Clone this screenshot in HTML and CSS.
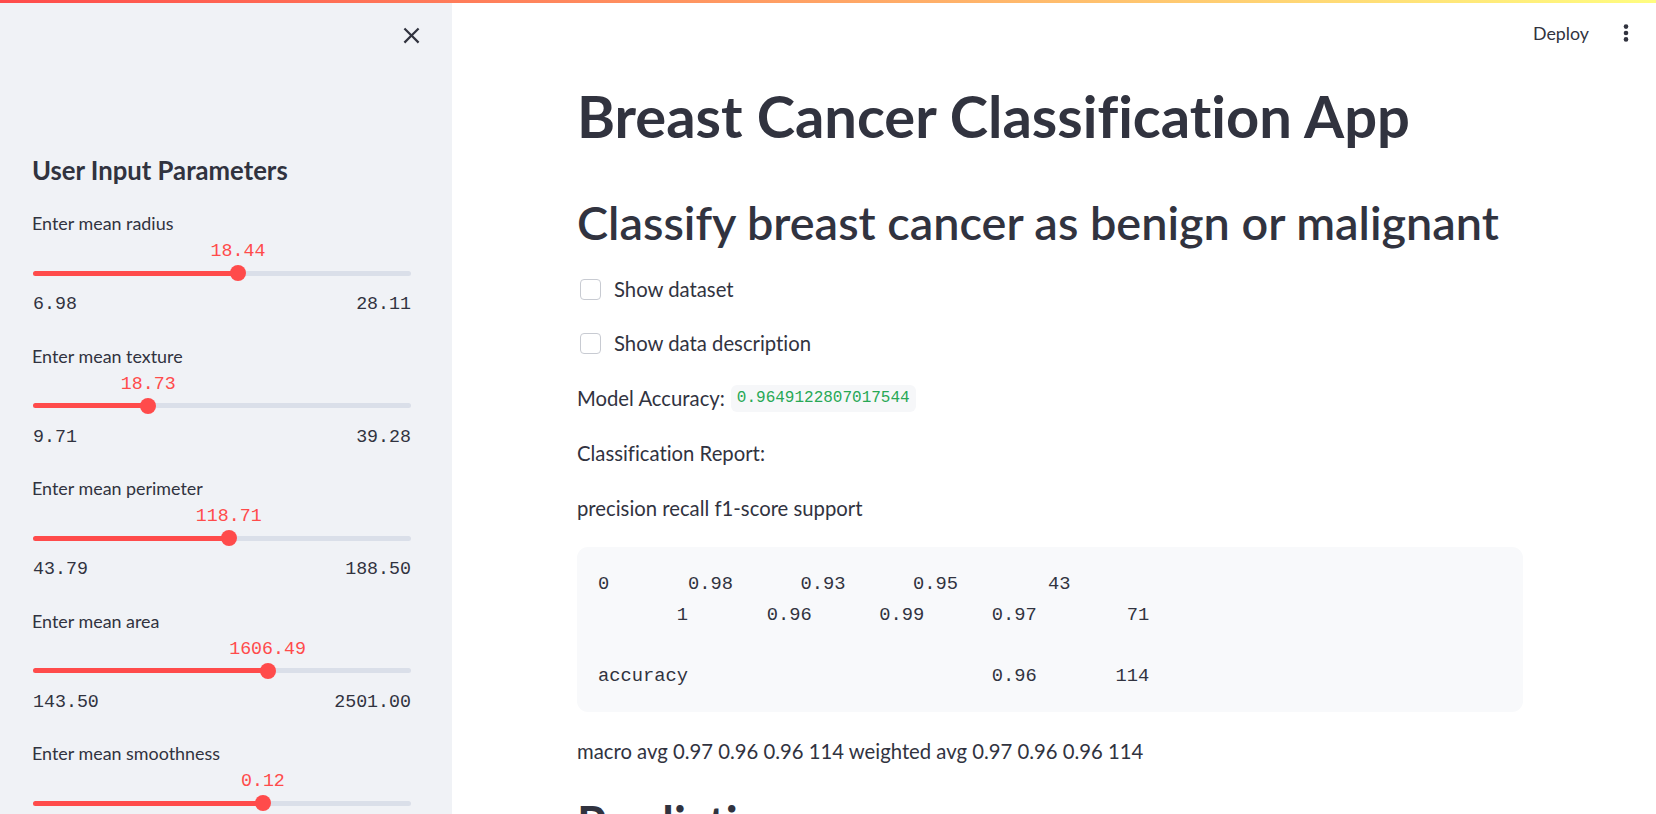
FILE: index.html
```html
<!DOCTYPE html>
<html lang="en">
<head>
<meta charset="utf-8">
<title>Breast Cancer Classification App</title>
<link rel="stylesheet" href="styles.css">
</head>
<body>
<div class="decoration"></div>
<div class="app">
  <aside class="sidebar">
    <div class="sb-top">
      <button class="close-btn" aria-label="Close sidebar">
        <svg width="27" height="27" viewBox="0 0 24 24"><path fill="#31333f" d="M19 6.41L17.59 5 12 10.59 6.41 5 5 6.41 10.59 12 5 17.59 6.41 19 12 13.41 17.59 19 19 17.59 13.41 12z"/></svg>
      </button>
    </div>
    <h2 class="sb-title">User Input Parameters</h2>

    <div class="slider">
      <div class="sl-label">Enter mean radius</div>
      <div class="sl-value"><span class="sl-val" style="left:54.24%">18.44</span></div>
      <div class="sl-track"><div class="sl-rail"><div class="sl-fill" style="width:54.24%"></div></div><div class="sl-thumb" style="left:54.24%"></div></div>
      <div class="sl-range"><span>6.98</span><span>28.11</span></div>
    </div>

    <div class="slider">
      <div class="sl-label">Enter mean texture</div>
      <div class="sl-value"><span class="sl-val" style="left:30.50%">18.73</span></div>
      <div class="sl-track"><div class="sl-rail"><div class="sl-fill" style="width:30.50%"></div></div><div class="sl-thumb" style="left:30.50%"></div></div>
      <div class="sl-range"><span>9.71</span><span>39.28</span></div>
    </div>

    <div class="slider">
      <div class="sl-label">Enter mean perimeter</div>
      <div class="sl-value"><span class="sl-val" style="left:51.77%">118.71</span></div>
      <div class="sl-track"><div class="sl-rail"><div class="sl-fill" style="width:51.77%"></div></div><div class="sl-thumb" style="left:51.77%"></div></div>
      <div class="sl-range"><span>43.79</span><span>188.50</span></div>
    </div>

    <div class="slider">
      <div class="sl-label">Enter mean area</div>
      <div class="sl-value"><span class="sl-val" style="left:62.06%">1606.49</span></div>
      <div class="sl-track"><div class="sl-rail"><div class="sl-fill" style="width:62.06%"></div></div><div class="sl-thumb" style="left:62.06%"></div></div>
      <div class="sl-range"><span>143.50</span><span>2501.00</span></div>
    </div>

    <div class="slider">
      <div class="sl-label">Enter mean smoothness</div>
      <div class="sl-value"><span class="sl-val" style="left:60.82%">0.12</span></div>
      <div class="sl-track"><div class="sl-rail"><div class="sl-fill" style="width:60.82%"></div></div><div class="sl-thumb" style="left:60.82%"></div></div>
    </div>
  </aside>

  <main class="main">
    <header class="topbar">
      <span class="deploy">Deploy</span>
      <svg class="kebab" width="10" height="24" viewBox="0 0 10 24"><circle cx="5" cy="5.6" r="2.3" fill="#31333f"/><circle cx="5" cy="12" r="2.3" fill="#31333f"/><circle cx="5" cy="18.4" r="2.3" fill="#31333f"/></svg>
    </header>
    <div class="content">
      <h1 class="title">Breast Cancer Classification App</h1>
      <h2 class="subtitle">Classify breast cancer as benign or malignant</h2>
      <label class="check"><span class="box"></span><span>Show dataset</span></label>
      <label class="check"><span class="box"></span><span>Show data description</span></label>
      <p class="text acc">Model Accuracy: <code class="pill">0.9649122807017544</code></p>
      <p class="text">Classification Report:</p>
      <p class="text">precision recall f1-score support</p>
      <pre class="codeblock">0       0.98      0.93      0.95        43
       1       0.96      0.99      0.97        71

accuracy                           0.96       114</pre>
      <p class="text">macro avg 0.97 0.96 0.96 114 weighted avg 0.97 0.96 0.96 114</p>
      <h2 class="subtitle pred">Prediction</h2>
    </div>
  </main>
</div>
</body>
</html>
```
FILE: styles.css
```css
html, body {
  margin: 0;
  padding: 0;
  height: 100%;
  overflow: hidden;
  background: #ffffff;
  color: #31333f;
  font-family: "Lato", "Noto Sans", sans-serif;
  font-variant-ligatures: none;
}

.decoration {
  position: fixed;
  top: 0;
  left: 0;
  right: 0;
  height: 3px;
  background: linear-gradient(90deg, rgb(255, 75, 75), rgb(255, 253, 128));
  z-index: 10;
}

.app {
  display: flex;
  height: 814px;
  overflow: hidden;
}

/* ---------- Sidebar ---------- */
.sidebar {
  width: 452px;
  flex: 0 0 452px;
  height: 814px;
  background: #f0f2f6;
  box-sizing: border-box;
  padding: 0 41px 0 33px;
  overflow: hidden;
}

.sb-top {
  height: 71px;
  display: flex;
  justify-content: flex-end;
  align-items: center;
  margin-right: -14px;
}

.close-btn {
  border: 0;
  background: transparent;
  padding: 0;
  width: 27px;
  height: 27px;
  display: flex;
}

.sb-title {
  margin: 83px 0 0 -1px;
  font-size: 25.7px;
  font-weight: 700;
  line-height: 32px;
  height: 32px;
  color: #31333f;
}

.slider {
  margin-top: 25px;
  display: flex;
  flex-direction: column;
}
.slider + .slider {
  margin-top: 27.5px;
}

.sl-label {
  font-size: 17.9px;
  line-height: 24px;
  height: 24px;
  color: #31333f;
  margin-left: -1px;
}

.sl-value {
  position: relative;
  height: 24px;
  margin-top: 4px;
}

.sl-val {
  position: absolute;
  top: 0;
  transform: translateX(-50%);
  font-family: "Liberation Mono", monospace;
  font-size: 18.3px;
  line-height: 24px;
  color: rgb(255, 75, 75);
  white-space: nowrap;
}

.sl-track {
  position: relative;
  height: 16px;
  margin-top: 2px;
  display: flex;
  align-items: center;
}

.sl-rail {
  width: 100%;
  height: 5px;
  border-radius: 3px;
  background: rgb(218, 223, 233);
  overflow: hidden;
}

.sl-fill {
  height: 100%;
  background: rgb(255, 75, 75);
}

.sl-thumb {
  position: absolute;
  top: 0;
  width: 16px;
  height: 16px;
  border-radius: 50%;
  background: rgb(255, 75, 75);
  transform: translateX(-50%);
}

.sl-range {
  display: flex;
  justify-content: space-between;
  margin-top: 11px;
  height: 24px;
  font-family: "Liberation Mono", monospace;
  font-size: 18.3px;
  line-height: 24px;
  color: #31333f;
}

/* ---------- Main ---------- */
.main {
  flex: 1 1 auto;
  display: flex;
  flex-direction: column;
  min-width: 0;
}

.topbar {
  height: 66px;
  flex: 0 0 66px;
  display: flex;
  justify-content: flex-end;
  align-items: center;
  gap: 32px;
  padding-right: 25px;
}

.deploy {
  font-size: 17.8px;
  color: #31333f;
}

.kebab {
  display: block;
}

.content {
  width: 946px;
  margin-left: 125px;
  display: flex;
  flex-direction: column;
  flex: 0 0 auto;
}

.content > * {
  flex-shrink: 0;
}

.title {
  margin: 15px 0 0 0;
  font-size: 57.9px;
  font-weight: 700;
  line-height: 69px;
  height: 69px;
  color: #31333f;
  white-space: nowrap;
}

.subtitle {
  margin: 44px 0 0 0;
  font-size: 46.8px;
  font-weight: 600;
  line-height: 56px;
  height: 56px;
  color: #31333f;
  white-space: nowrap;
}

.check {
  display: flex;
  align-items: center;
  gap: 13px;
  height: 30px;
  margin-top: 24px;
  font-size: 20.3px;
  color: #31333f;
  padding-left: 3px;
}

.box {
  width: 19px;
  height: 19px;
  border: 1px solid rgb(200, 203, 210);
  border-radius: 4px;
  background: #fff;
  flex: 0 0 auto;
}

.text {
  margin: 25px 0 0 0;
  height: 30px;
  line-height: 30px;
  font-size: 20.3px;
  color: #31333f;
  white-space: nowrap;
}

.acc {
  display: flex;
  align-items: center;
  gap: 6px;
}

.pill {
  display: inline-block;
  height: 27px;
  line-height: 27px;
  padding: 0 6px;
  border-radius: 6px;
  background: rgb(246, 247, 249);
  color: rgb(40, 168, 85);
  font-family: "Liberation Mono", monospace;
  font-size: 16px;
}

.codeblock {
  margin: 24px 0 0 0;
  padding: 22px 21px 21px 21px;
  background: rgb(248, 249, 251);
  border-radius: 11px;
  font-family: "Liberation Mono", monospace;
  font-size: 18.75px;
  line-height: 30.5px;
  color: #31333f;
  white-space: pre;
}

.codeblock + .text {
  margin-top: 24px;
}

.pred {
  margin-top: 29px;
  font-weight: 700;
}
```
